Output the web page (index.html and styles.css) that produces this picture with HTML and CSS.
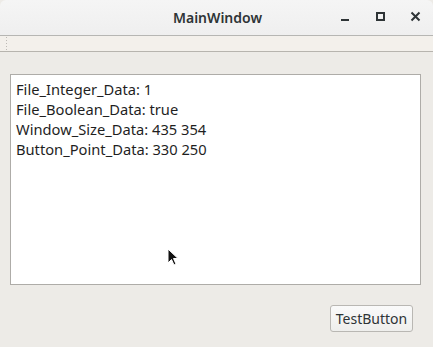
FILE: index.html
```html
<!DOCTYPE html>
<html>
<head>
<meta charset="utf-8">
<link rel="stylesheet" href="styles.css">
</head>
<body>
<div class="window">
  <div class="titlebar">
    <div class="title">MainWindow</div>
    <div class="controls">
      <svg class="ctl" width="14" height="14" viewBox="0 0 14 14"><rect x="2" y="9" width="8" height="2" fill="#2e3436"/></svg>
      <svg class="ctl" width="14" height="14" viewBox="0 0 14 14"><rect x="3" y="3" width="7" height="7" fill="none" stroke="#2e3436" stroke-width="2"/></svg>
      <svg class="ctl" width="14" height="14" viewBox="0 0 14 14"><path d="M2.5 2.5 L10.5 10.5 M10.5 2.5 L2.5 10.5" stroke="#2e3436" stroke-width="2"/></svg>
    </div>
  </div>
  <div class="toolbar"><div class="grip"></div></div>
  <div class="content">
    <div class="textbox">
      <div class="line">File_Integer_Data: 1</div>
      <div class="line">File_Boolean_Data: true</div>
      <div class="line">Window_Size_Data: 435 354</div>
      <div class="line">Button_Point_Data: 330 250</div>
    </div>
    <div class="actions">
      <button class="btn">TestButton</button>
    </div>
  </div>
  <svg class="cursor" width="14" height="20" viewBox="0 0 14 20"><path d="M1 1 L1 15 L4.5 11.5 L7 17 L9 16 L6.5 10.5 L11 10.5 Z" fill="#111" stroke="#fff" stroke-width="1"/></svg>
</div>
</body>
</html>
```
FILE: styles.css
```css
html, body { margin: 0; padding: 0; }
body { width: 433px; height: 347px; overflow: hidden; background: #edebe7; font-family: "Noto Sans", "Open Sans", sans-serif; }
.window { position: relative; width: 433px; height: 347px; display: flex; flex-direction: column; background: #edebe7; }
.titlebar { height: 35px; flex: none; background: linear-gradient(#f5f5f5, #efefef); border-bottom: 1px solid #b6b6b3; border-radius: 6px 6px 0 0; display: flex; align-items: center; justify-content: center; position: relative; }
.title { font-weight: 600; font-size: 14px; color: #2e3436; margin-left: 2px; }
.controls { position: absolute; right: 10px; top: 10px; display: flex; gap: 21px; }
.ctl { display: block; }
.toolbar { height: 15px; flex: none; background: #f3f0eb; border-bottom: 1px solid #b7b4ae; padding-left: 5px; display: flex; align-items: center; }
.grip { width: 3px; height: 15px; background-image: radial-gradient(circle, #bdbab5 0.8px, transparent 1px); background-size: 3px 3px; }
.content { flex: 1; padding: 22px 12px 0 10px; display: flex; flex-direction: column; }
.textbox { background: #fff; border: 1px solid #aeaca8; padding: 4px 5px; box-sizing: border-box; height: 211px; width: 411px; }
.line { font-size: 14.7px; line-height: 20px; color: #1f1f1f; }
.actions { display: flex; justify-content: flex-end; padding-top: 20px; padding-right: 8px; }
.btn { width: 83px; height: 27px; font-family: inherit; font-size: 14px; color: #2e3436; background: linear-gradient(#fafafa, #eeeeec); border: 1px solid #b9b7b3; border-radius: 3px; padding: 0; }
.cursor { position: absolute; left: 167px; top: 248px; }
```
